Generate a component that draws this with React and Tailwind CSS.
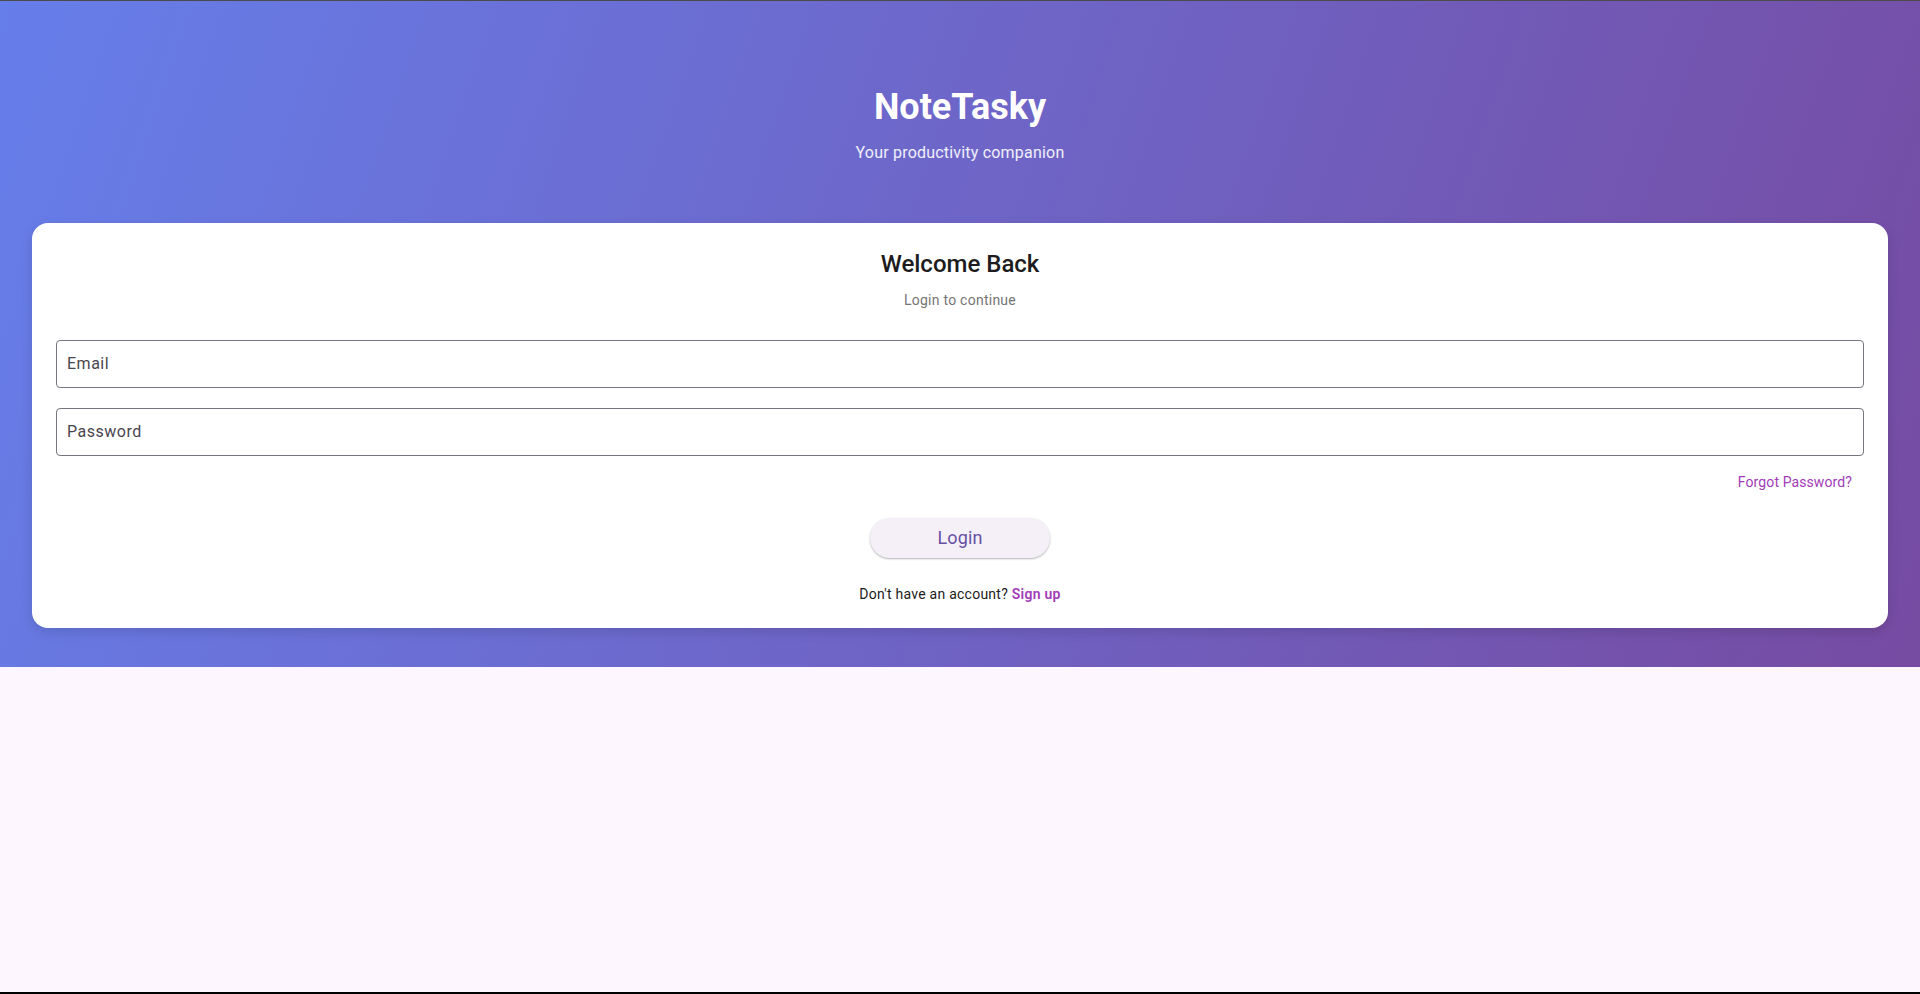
import React from 'react'

const Field = ({ label }) => (
  <div className="flex h-12 items-center rounded-[4px] border border-[#79747e] pl-[10px] text-base tracking-[0.5px] text-[#49454f]">
    {label}
  </div>
)

const LoginCard = () => (
  <div className="rounded-2xl bg-white px-6 pt-[25px] pb-[24px] shadow-[0_4px_12px_rgba(0,0,0,0.12)]">
    <div className="flex flex-col items-center">
      <h2 className="text-2xl leading-8 font-medium text-[#1d1b20]">Welcome Back</h2>
      <p className="mt-2.5 text-sm leading-5 tracking-[0.25px] text-[#757575]">Login to continue</p>
    </div>

    <div className="mt-[30px] flex flex-col gap-5">
      <Field label="Email" />
      <Field label="Password" />
    </div>

    <div className="mt-4 flex justify-end pr-3">
      <span className="text-sm leading-5 tracking-[0.1px] text-[#a23bb8]">Forgot Password?</span>
    </div>

    <div className="mt-[26px] flex justify-center">
      <button className="h-10 w-[180px] rounded-full bg-[#f5f0f8] text-lg tracking-[0.1px] text-[#6750a4] shadow-[0_1px_2px_rgba(0,0,0,0.3)]">
        Login
      </button>
    </div>

    <p className="mt-[26px] text-center text-sm leading-5 tracking-[0.25px] text-[#1d1b20]">
      Don't have an account?{' '}
      <span className="font-semibold text-[#a23bb8]">Sign up</span>
    </p>
  </div>
)

export default function App() {
  return (
    <div className="flex h-screen flex-col bg-[#fdf6fe] font-['Roboto',sans-serif]">
      <div className="h-px bg-[#4b4b4b]" />
      <div className="h-[666px] bg-[linear-gradient(109deg,#667eea_0%,#764ba2_100%)] px-8 pt-[85px]">
        <div className="flex flex-col items-center text-white">
          <h1 className="text-4xl leading-[43px] font-bold">NoteTasky</h1>
          <p className="mt-3 text-base leading-6 tracking-[0.2px] text-white/90">Your productivity companion</p>
        </div>
        <div className="mt-[58px]">
          <LoginCard />
        </div>
      </div>
      <div className="flex-1" />
      <div className="h-[2px] bg-black" />
    </div>
  )
}
